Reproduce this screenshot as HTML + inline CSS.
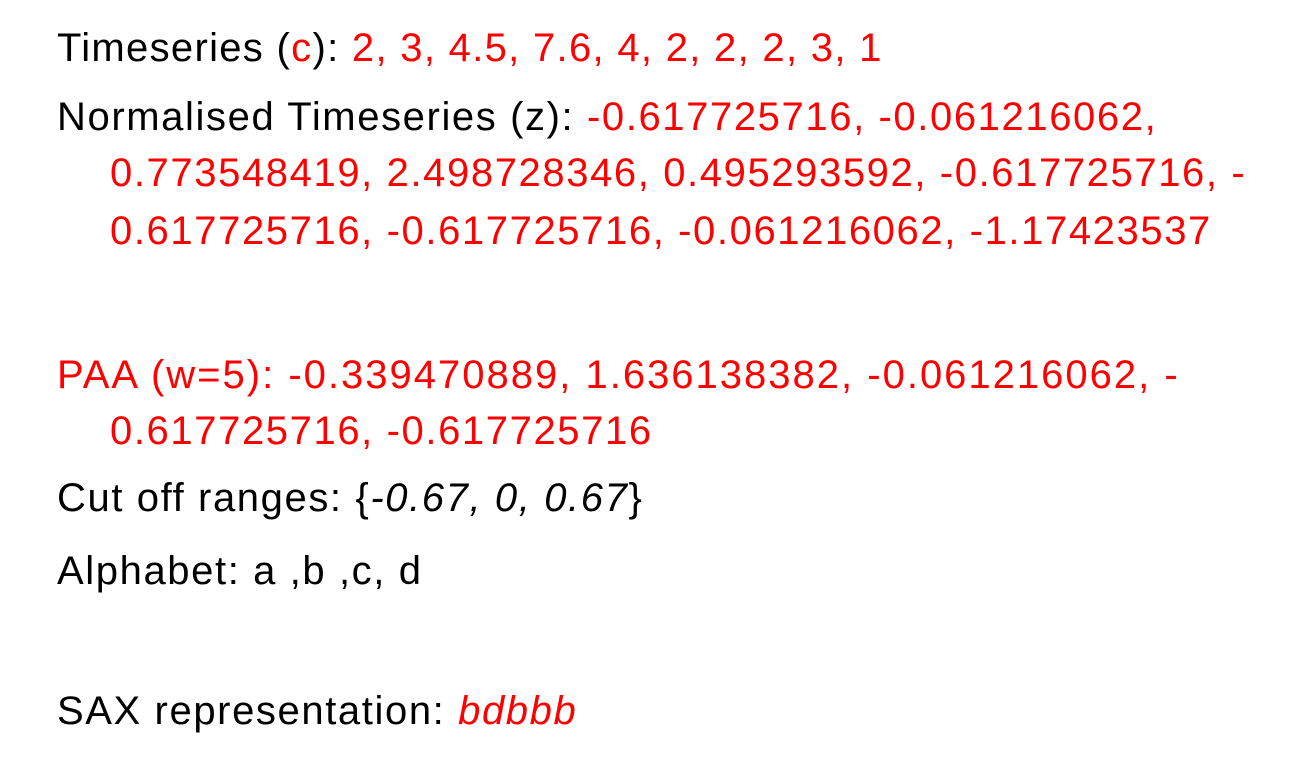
<!DOCTYPE html>
<html><head><meta charset="utf-8"><style>
body{margin:0;width:1305px;height:781px;background:#fff;overflow:hidden;font-family:"Liberation Sans",sans-serif;font-size:40px;letter-spacing:1.6px;color:#000}
.l{position:absolute;white-space:nowrap;line-height:1}
.r{color:#f00}
i{font-style:italic}
</style></head><body>
<div class="l" style="left:57px;top:28px;letter-spacing:1.3px">Timeseries (<span class="r">c</span>): <span class="r">2, 3, 4.5, 7.6, 4, 2, 2, 2, 3, 1</span></div>
<div class="l" style="left:57px;top:97px">Normalised Timeseries (z): <span class="r">-0.617725716, -0.061216062,</span></div>
<div class="l r" style="left:110px;top:153px">0.773548419, 2.498728346, 0.495293592, -0.617725716, -</div>
<div class="l r" style="left:110px;top:211px">0.617725716, -0.617725716, -0.061216062, -1.17423537</div>
<div class="l r" style="left:57px;top:355px;letter-spacing:2px">PAA (w=5): -0.339470889, 1.636138382, -0.061216062, -</div>
<div class="l r" style="left:110px;top:411px">0.617725716, -0.617725716</div>
<div class="l" style="left:57px;top:478px">Cut off ranges: {<i>-0.67, 0, 0.67</i>}</div>
<div class="l" style="left:57px;top:551px">Alphabet: a ,b ,c, d</div>
<div class="l" style="left:57px;top:691px">SAX representation: <i class="r">bdbbb</i></div>
</body></html>
